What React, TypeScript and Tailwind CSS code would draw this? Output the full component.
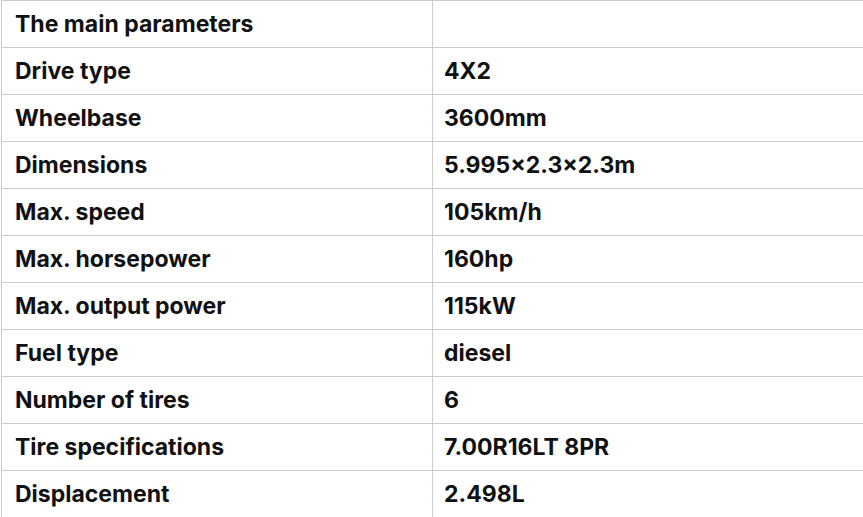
import React from "react";

const rows: [string, string][] = [
  ["The main parameters", ""],
  ["Drive type", "4X2"],
  ["Wheelbase", "3600mm"],
  ["Dimensions", "5.995×2.3×2.3m"],
  ["Max. speed", "105km/h"],
  ["Max. horsepower", "160hp"],
  ["Max. output power", "115kW"],
  ["Fuel type", "diesel"],
  ["Number of tires", "6"],
  ["Tire specifications", "7.00R16LT 8PR"],
  ["Displacement", "2.498L"],
];

export default function App() {
  return (
    <div className="w-[863px] h-[517px] overflow-hidden bg-white" style={{ fontFamily: "Inter, 'Liberation Sans', sans-serif" }}>
      <table className="border-collapse w-[880px] ml-px table-fixed">
        <colgroup>
          <col className="w-[431px]" />
          <col />
        </colgroup>
        <tbody>
          {rows.map(([k, v], i) => (
            <tr key={i} className="h-[47px]">
              <td className="border border-[#cccccc] pl-[13px] pr-2 py-0 align-middle text-[23px] font-bold text-[#111111] leading-none">{k}</td>
              <td className="border border-[#cccccc] pl-[11px] pr-2 py-0 align-middle text-[23px] font-bold text-[#111111] leading-none">{v}</td>
            </tr>
          ))}
        </tbody>
      </table>
    </div>
  );
}
